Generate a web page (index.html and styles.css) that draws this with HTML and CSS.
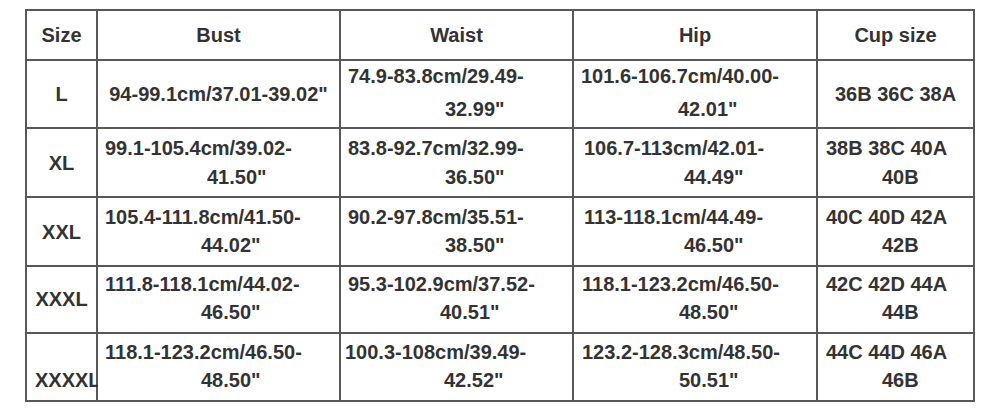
FILE: index.html
```html
<!DOCTYPE html>
<html lang="en">
<head>
<meta charset="utf-8">
<title>Size chart</title>
<link rel="stylesheet" href="styles.css">
</head>
<body>
<div class="sheet">
  <div class="cell ctr">Size</div>
  <div class="cell ctr">Bust</div>
  <div class="cell ctr">Waist</div>
  <div class="cell ctr">Hip</div>
  <div class="cell ctr">Cup size</div>

  <div class="cell ctr">L</div>
  <div class="cell ctr">94-99.1cm/37.01-39.02"</div>
  <div class="cell two lh33 up3"><span class="ln p7">74.9-83.8cm/29.49-</span><span class="ln p104">32.99"</span></div>
  <div class="cell two lh33 up3"><span class="ln p7">101.6-106.7cm/40.00-</span><span class="ln p104">42.01"</span></div>
  <div class="cell ctr">36B 36C 38A</div>

  <div class="cell ctr">XL</div>
  <div class="cell two lh29"><span class="ln p7">99.1-105.4cm/39.02-</span><span class="ln p109">41.50"</span></div>
  <div class="cell two lh29"><span class="ln p7">83.8-92.7cm/32.99-</span><span class="ln p104">36.50"</span></div>
  <div class="cell two lh29"><span class="ln p10">106.7-113cm/42.01-</span><span class="ln p110">44.49"</span></div>
  <div class="cell two lh29"><span class="ln p8">38B 38C 40A</span><span class="ln p64">40B</span></div>

  <div class="cell ctr">XXL</div>
  <div class="cell two lh28 up1"><span class="ln p7">105.4-111.8cm/41.50-</span><span class="ln p103">44.02"</span></div>
  <div class="cell two lh28 up1"><span class="ln p7">90.2-97.8cm/35.51-</span><span class="ln p104">38.50"</span></div>
  <div class="cell two lh28 up1"><span class="ln p10">113-118.1cm/44.49-</span><span class="ln p110">46.50"</span></div>
  <div class="cell two lh28 up1"><span class="ln p8">40C 40D 42A</span><span class="ln p64">42B</span></div>

  <div class="cell ctr up2">XXXL</div>
  <div class="cell two lh28 up3"><span class="ln p7">111.8-118.1cm/44.02-</span><span class="ln p103">46.50"</span></div>
  <div class="cell two lh28 up3"><span class="ln p7">95.3-102.9cm/37.52-</span><span class="ln p99">40.51"</span></div>
  <div class="cell two lh28 up3"><span class="ln p8">118.1-123.2cm/46.50-</span><span class="ln p105">48.50"</span></div>
  <div class="cell two lh28 up3"><span class="ln p8">42C 42D 44A</span><span class="ln p64">44B</span></div>

  <div class="cell two lh28 up2"><span class="ln p8">&nbsp;</span><span class="ln p8">XXXXL</span></div>
  <div class="cell two lh28 up2"><span class="ln p7">118.1-123.2cm/46.50-</span><span class="ln p103">48.50"</span></div>
  <div class="cell two lh28 up2"><span class="ln p4">100.3-108cm/39.49-</span><span class="ln p103">42.52"</span></div>
  <div class="cell two lh28 up2"><span class="ln p8">123.2-128.3cm/48.50-</span><span class="ln p105">50.51"</span></div>
  <div class="cell two lh28 up2"><span class="ln p8">44C 44D 46A</span><span class="ln p64">46B</span></div>
</div>
</body>
</html>
```

FILE: styles.css
```css
html, body {
  margin: 0;
  padding: 0;
  background: #ffffff;
}

.sheet {
  display: grid;
  grid-template-columns: 69px 241px 231px 242px 155px;
  grid-template-rows: 48px 66px 67px 67px 65px 66px;
  gap: 2px;
  padding: 2px;
  width: max-content;
  margin: 9px 0 0 25px;
  background: #585858;
}

.cell {
  background: #ffffff;
  display: flex;
  flex-direction: column;
  justify-content: center;
  font-family: "Liberation Sans", Arial, sans-serif;
  font-weight: bold;
  font-size: 20px;
  line-height: 24px;
  color: #333333;
  white-space: nowrap;
  overflow: visible;
}

.ctr {
  align-items: center;
  text-align: center;
}

.two {
  align-items: flex-start;
  text-align: left;
}

.ln { display: block; }

.lh33 .ln { line-height: 33px; }
.lh29 .ln { line-height: 29px; }
.lh28 .ln { line-height: 28px; }

.up1 { padding-bottom: 1px; }
.up2 { padding-bottom: 2px; }
.up3 { padding-bottom: 3px; }

.p4 { padding-left: 4px; }
.p7 { padding-left: 7px; }
.p8 { padding-left: 8px; }
.p10 { padding-left: 10px; }
.p64 { padding-left: 64px; }
.p99 { padding-left: 99px; }
.p103 { padding-left: 103px; }
.p104 { padding-left: 104px; }
.p105 { padding-left: 105px; }
.p109 { padding-left: 109px; }
.p110 { padding-left: 110px; }
```
